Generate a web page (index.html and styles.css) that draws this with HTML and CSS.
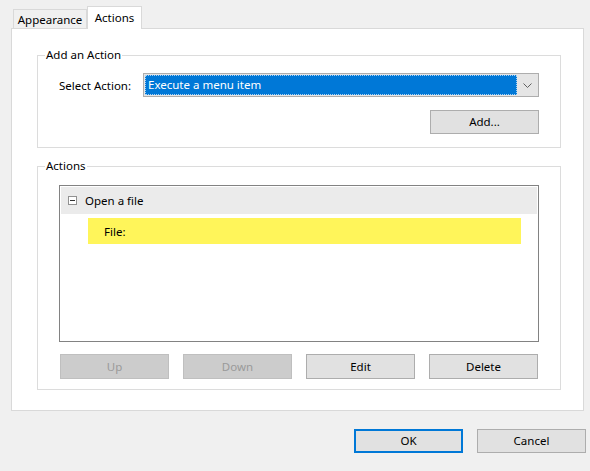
FILE: index.html
```html
<!DOCTYPE html>
<html>
<head>
<meta charset="utf-8">
<link rel="stylesheet" href="styles.css">
</head>
<body>
<div class="tabs">
  <div class="tab">Appearance</div>
  <div class="tab active">Actions</div>
</div>
<div class="panel">
  <div class="group group-add">
    <div class="legend">Add an Action</div>
    <div class="select-row">
      <span class="label">Select Action:</span>
      <div class="combo">
        <div class="combo-value"><span>Execute a menu item</span></div>
        <div class="combo-arrow">
          <svg width="9" height="5" viewBox="0 0 9 5"><path d="M0.5 0.5 L4.5 4.5 L8.5 0.5" fill="none" stroke="#606060" stroke-width="1"/></svg>
        </div>
      </div>
    </div>
    <div class="add-row">
      <button class="btn">Add...</button>
    </div>
  </div>
  <div class="group group-actions">
    <div class="legend">Actions</div>
    <div class="tree">
      <div class="tree-row">
        <svg class="expander" width="9" height="9" viewBox="0 0 9 9"><rect x="0.5" y="0.5" width="8" height="8" fill="#fff" stroke="#919191"/><path d="M2 4.5 H7" stroke="#333" stroke-width="1"/></svg>
        <span>Open a file</span>
      </div>
      <div class="tree-child"><span>File:</span></div>
    </div>
    <div class="btn-row">
      <button class="btn disabled">Up</button>
      <button class="btn disabled">Down</button>
      <button class="btn">Edit</button>
      <button class="btn">Delete</button>
    </div>
  </div>
</div>
<div class="dialog-buttons">
  <button class="btn default">OK</button>
  <button class="btn">Cancel</button>
</div>
</body>
</html>
```
FILE: styles.css
```css
html, body {
  margin: 0;
  padding: 0;
}
body {
  background: #f0f0f0;
  font-family: "Noto Sans", "Open Sans", sans-serif;
  font-size: 11.5px;
  line-height: 15px;
  color: #000;
  width: 590px;
  height: 471px;
  overflow: hidden;
}
.tabs {
  display: flex;
  align-items: flex-end;
  height: 28px;
  padding-left: 13px;
  box-sizing: border-box;
}
.tab {
  box-sizing: border-box;
  height: 19px;
  width: 74px;
  border: 1px solid #d9d9d9;
  border-bottom: none;
  background: #f0f0f0;
  display: flex;
  align-items: center;
  justify-content: center;
  padding-top: 1px;
}
.tab.active {
  position: relative;
  z-index: 1;
  width: 55px;
  height: 23px;
  margin-bottom: -1px;
  background: #fff;
  border-left: 1px solid #d9d9d9;
  padding-bottom: 3px;
}
.panel {
  box-sizing: border-box;
  margin-left: 11px;
  width: 573px;
  height: 383px;
  background: #fff;
  border: 1px solid #d9d9d9;
  padding: 26px 22px 0 25px;
}
.group {
  position: relative;
  box-sizing: border-box;
  border: 1px solid #dcdcdc;
}
.legend {
  position: absolute;
  left: 7px;
  top: -9px;
  padding: 0 1px;
  background: #fff;
}
.group-add {
  height: 93px;
  padding: 17px 21px 0 21px;
}
.select-row {
  display: flex;
  align-items: center;
  height: 24px;
}
.label {
  width: 84px;
  flex: none;
}
.combo {
  flex: 1;
  box-sizing: border-box;
  height: 24px;
  border: 1px solid #adadad;
  background: #e5e5e5;
  display: flex;
  align-items: stretch;
  padding: 1px;
}
.combo-value {
  flex: 1;
  background: #0078d7;
  color: #fff;
  box-sizing: border-box;
  border: 1px dotted #a9d2f3;
  display: flex;
  align-items: center;
  padding-left: 2px;
  padding-bottom: 1px;
}
.combo-arrow {
  width: 19px;
  display: flex;
  align-items: center;
  justify-content: center;
  padding-left: 1px;
}
.add-row {
  display: flex;
  justify-content: flex-end;
  margin-top: 13px;
}
.btn {
  box-sizing: border-box;
  width: 109px;
  height: 24px;
  border: 1px solid #adadad;
  background: #e1e1e1;
  font-family: inherit;
  font-size: inherit;
  line-height: 15px;
  color: #000;
  padding: 0 0 1px;
  margin: 0;
}
.btn.disabled {
  background: #cccccc;
  border-color: #bfbfbf;
  color: #9a9a9a;
}
.btn.default {
  border: 2px solid #0078d7;
}
.group-actions {
  margin-top: 18px;
  height: 224px;
  padding: 18px 21px 0 21px;
}
.tree {
  box-sizing: border-box;
  height: 157px;
  border: 1px solid #828282;
  padding: 1px;
}
.tree-row {
  height: 27px;
  background: #ebebeb;
  display: flex;
  align-items: center;
  padding-left: 7px;
}
.expander {
  margin-right: 8px;
  flex: none;
}
.tree-child {
  margin: 4px 16px 0 27px;
  height: 26px;
  background: #fff55a;
  display: flex;
  align-items: center;
  padding-left: 16px;
}
.btn-row {
  display: flex;
  gap: 14px;
  margin-top: 12px;
  padding-left: 1px;
}
.btn-row .btn {
  height: 25px;
}
.dialog-buttons {
  display: flex;
  justify-content: flex-end;
  gap: 14px;
  margin-top: 18px;
  padding-right: 4px;
}
```
